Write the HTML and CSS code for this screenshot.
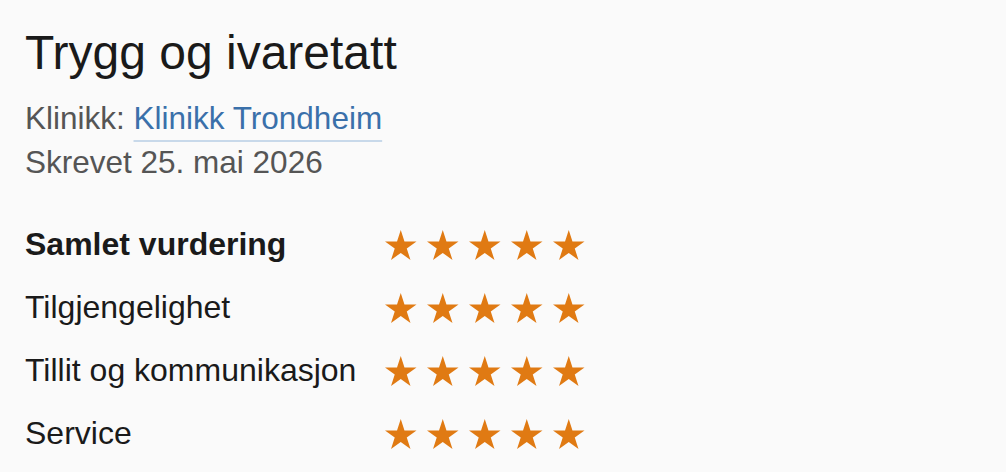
FILE: index.html
```html
<!DOCTYPE html>
<html lang="no">
<head>
    <meta charset="UTF-8">
    <meta name="viewport" content="width=device-width, initial-scale=1.0">
    <title>Omtale</title>
    <link rel="stylesheet" href="styles.css">
</head>

<body>
    <div class="review">
        <h1 class="title">Trygg og ivaretatt</h1>
        <div class="meta">Klinikk: <a href="#" class="clinic">Klinikk Trondheim</a></div>
        <div class="meta">Skrevet 25. mai 2026</div>

        <div class="ratings">
            <div class="label total">Samlet vurdering</div>
            <div class="stars" data-score="5"></div>

            <div class="label">Tilgjengelighet</div>
            <div class="stars" data-score="5"></div>

            <div class="label">Tillit og kommunikasjon</div>
            <div class="stars" data-score="5"></div>

            <div class="label">Service</div>
            <div class="stars" data-score="5"></div>
        </div>
    </div>

    <script>
        // five-point star, outer radius 50, inner 19.1
        const starPoints = '50,0 61.23,34.55 97.55,34.55 68.17,55.9 79.39,90.45 50,69.1 20.61,90.45 31.83,55.9 2.45,34.55 38.77,34.55';

        document.querySelectorAll('.stars').forEach(el => {
            const score = Number(el.dataset.score);
            let html = '';
            for (let i = 0; i < 5; i++) {
                html += `<svg class="star ${i < score ? 'on' : ''}" viewBox="2.45 0 95.1 90.45"><polygon points="${starPoints}"/></svg>`;
            }
            el.innerHTML = html;
        });
    </script>
</body>
</html>
```

FILE: styles.css
```css
body {
    margin: 0;
    background: #fafafa;
    font-family: "Liberation Sans", Arial, sans-serif;
    color: #1a1a1a;
}

.review {
    padding: 24px 25px;
}

.title {
    font-size: 48px;
    font-weight: normal;
    margin: 0 0 14px 0;
    line-height: 58px;
}

.meta {
    font-size: 31.5px;
    color: #555;
    line-height: 44px;
}

.clinic {
    color: #3a70aa;
    text-decoration: underline;
    text-decoration-color: #c8d9ea;
    text-decoration-thickness: 2px;
    text-underline-offset: 11px;
}

.ratings {
    display: grid;
    grid-template-columns: 360px auto;
    grid-auto-rows: 63px;
    align-items: center;
    justify-content: start;
    margin-top: 29px;
}

.label {
    font-size: 32px;
}

.total {
    font-weight: bold;
}

.stars {
    display: flex;
    gap: 10.5px;
}

.star {
    width: 31.5px;
    height: 30px;
    fill: #ddd;
}

.star.on {
    fill: #e07a13;
}
```
